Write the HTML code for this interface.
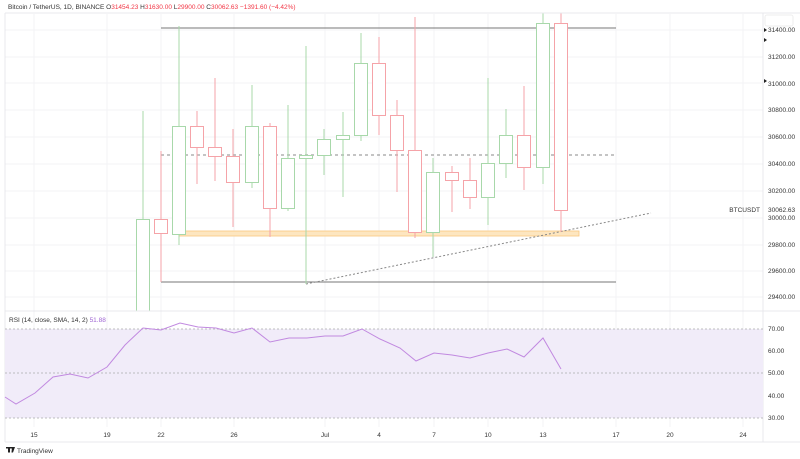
<!DOCTYPE html>
<html><head><meta charset="utf-8"><style>
html,body{margin:0;padding:0;background:#fff;}
svg{display:block;font-family:"Liberation Sans",sans-serif;}
</style></head><body>
<svg width="800" height="459" viewBox="0 0 800 459" xmlns="http://www.w3.org/2000/svg">
<rect width="800" height="459" fill="#fff"/>
<!-- grid -->
<g stroke="#f3f3f5" stroke-width="1">
<line x1="34" y1="14" x2="34" y2="427"/><line x1="107" y1="14" x2="107" y2="427"/><line x1="161" y1="14" x2="161" y2="427"/><line x1="234" y1="14" x2="234" y2="427"/><line x1="325" y1="14" x2="325" y2="427"/><line x1="379" y1="14" x2="379" y2="427"/><line x1="434" y1="14" x2="434" y2="427"/><line x1="488" y1="14" x2="488" y2="427"/><line x1="543" y1="14" x2="543" y2="427"/><line x1="616" y1="14" x2="616" y2="427"/><line x1="670" y1="14" x2="670" y2="427"/><line x1="743" y1="14" x2="743" y2="427"/>
<line x1="5" y1="30" x2="763" y2="30"/><line x1="5" y1="57" x2="763" y2="57"/><line x1="5" y1="83" x2="763" y2="83"/><line x1="5" y1="110" x2="763" y2="110"/><line x1="5" y1="137" x2="763" y2="137"/><line x1="5" y1="164" x2="763" y2="164"/><line x1="5" y1="191" x2="763" y2="191"/><line x1="5" y1="218" x2="763" y2="218"/><line x1="5" y1="245" x2="763" y2="245"/><line x1="5" y1="271" x2="763" y2="271"/><line x1="5" y1="297" x2="763" y2="297"/>
</g>
<!-- header -->
<text x="8" y="9" font-size="6.5" fill="#333">Bitcoin / TetherUS, 1D, BINANCE <tspan fill="#333"> O</tspan><tspan fill="#f23645">31454.23</tspan><tspan fill="#333"> H</tspan><tspan fill="#f23645">31630.00</tspan><tspan fill="#333"> L</tspan><tspan fill="#f23645">29900.00</tspan><tspan fill="#333"> C</tspan><tspan fill="#f23645">30062.63</tspan><tspan fill="#f23645">  −1391.60 (−4.42%)</tspan></text>
<!-- drawings -->
<rect x="179" y="231" width="400" height="5" fill="#fde6c0" stroke="#f9c77e" stroke-width="0.8"/>
<line x1="161" y1="28" x2="616" y2="28" stroke="#777" stroke-width="1"/>
<line x1="161" y1="282" x2="616" y2="282" stroke="#777" stroke-width="1"/>
<line x1="161" y1="155" x2="616" y2="155" stroke="#888" stroke-width="1" stroke-dasharray="3,3"/>
<line x1="306" y1="284" x2="651" y2="213" stroke="#888" stroke-width="1" stroke-dasharray="2,2"/>
<line x1="161" y1="151" x2="161" y2="282" stroke="#f5a3a8"/>
<!-- candles -->
<g fill="#fff" stroke-width="1">
<g stroke="#a8d8aa"><line x1="143" y1="111" x2="143" y2="219"/><path d="M136.5 311V219.5h13V311"/></g>
<g stroke="#f5a3a8"><rect x="154.5" y="219.5" width="13" height="14"/></g>
<g stroke="#a8d8aa"><line x1="179" y1="26" x2="179" y2="245"/><rect x="172.5" y="126.5" width="13" height="108"/></g>
<g stroke="#f5a3a8"><line x1="197" y1="111" x2="197" y2="184"/><rect x="190.5" y="126.5" width="13" height="21"/></g>
<g stroke="#f5a3a8"><line x1="215" y1="78" x2="215" y2="181"/><rect x="208.5" y="147.5" width="13" height="9"/></g>
<g stroke="#f5a3a8"><line x1="233" y1="129" x2="233" y2="227"/><rect x="226.5" y="156.5" width="13" height="26"/></g>
<g stroke="#a8d8aa"><line x1="252" y1="85" x2="252" y2="188"/><rect x="245.5" y="126.5" width="13" height="56"/></g>
<g stroke="#f5a3a8"><line x1="270" y1="123" x2="270" y2="237"/><rect x="263.5" y="126.5" width="13" height="82"/></g>
<g stroke="#a8d8aa"><line x1="288" y1="105" x2="288" y2="211"/><rect x="281.5" y="158.5" width="13" height="50"/></g>
<g stroke="#a8d8aa"><line x1="306" y1="46" x2="306" y2="284"/><rect x="299.5" y="155.5" width="13" height="3"/></g>
<g stroke="#a8d8aa"><line x1="324" y1="129" x2="324" y2="175"/><rect x="317.5" y="139.5" width="13" height="16"/></g>
<g stroke="#a8d8aa"><line x1="343" y1="112" x2="343" y2="197"/><rect x="336.5" y="135.5" width="13" height="4"/></g>
<g stroke="#a8d8aa"><line x1="361" y1="33" x2="361" y2="141"/><rect x="354.5" y="63.5" width="13" height="72"/></g>
<g stroke="#f5a3a8"><line x1="379" y1="37" x2="379" y2="135"/><rect x="372.5" y="63.5" width="13" height="52"/></g>
<g stroke="#f5a3a8"><line x1="397" y1="100" x2="397" y2="192"/><rect x="390.5" y="115.5" width="13" height="35"/></g>
<g stroke="#f5a3a8"><line x1="415" y1="17" x2="415" y2="238"/><rect x="408.5" y="150.5" width="13" height="82"/></g>
<g stroke="#a8d8aa"><line x1="433" y1="158" x2="433" y2="257"/><rect x="426.5" y="172.5" width="13" height="60"/></g>
<g stroke="#f5a3a8"><line x1="452" y1="166" x2="452" y2="212"/><rect x="445.5" y="172.5" width="13" height="8"/></g>
<g stroke="#f5a3a8"><line x1="470" y1="158" x2="470" y2="209"/><rect x="463.5" y="180.5" width="13" height="17"/></g>
<g stroke="#a8d8aa"><line x1="488" y1="78" x2="488" y2="225"/><rect x="481.5" y="163.5" width="13" height="34"/></g>
<g stroke="#a8d8aa"><line x1="506" y1="109" x2="506" y2="178"/><rect x="499.5" y="135.5" width="13" height="28"/></g>
<g stroke="#f5a3a8"><line x1="524" y1="86" x2="524" y2="190"/><rect x="517.5" y="135.5" width="13" height="32"/></g>
<g stroke="#a8d8aa"><line x1="543" y1="13" x2="543" y2="184"/><rect x="536.5" y="23.5" width="13" height="144"/></g>
<g stroke="#f5a3a8"><line x1="561" y1="13" x2="561" y2="232"/><rect x="554.5" y="23.5" width="13" height="187"/></g>
</g>
<!-- frame -->
<g stroke="#e8e8ec" fill="none">
<line x1="5" y1="13" x2="800" y2="13"/>
<line x1="5" y1="311" x2="800" y2="311"/>
<line x1="5" y1="442" x2="800" y2="442"/>
<line x1="5" y1="13" x2="5" y2="442"/>
<line x1="763" y1="13" x2="763" y2="442"/>
</g>
<!-- price axis -->
<g font-size="6.5" fill="#333">
<text x="768" y="32">31400.00</text><text x="768" y="59">31200.00</text><text x="768" y="86">31000.00</text><text x="768" y="112">30800.00</text><text x="768" y="139">30600.00</text><text x="768" y="166">30400.00</text><text x="768" y="193">30200.00</text><text x="768" y="220">30000.00</text><text x="768" y="247">29800.00</text><text x="768" y="273">29600.00</text><text x="768" y="299">29400.00</text>
<text x="760" y="212" text-anchor="end">BTCUSDT</text><text x="768" y="212">30062.63</text>
<text x="768" y="331">70.00</text><text x="768" y="353">60.00</text><text x="768" y="375">50.00</text><text x="768" y="398">40.00</text><text x="768" y="420">30.00</text>
</g>
<g fill="#222"><path d="M764 28l3 2-3 2z"/><path d="M764 38l3 2-3 2z"/><path d="M764 79l3 2-3 2z"/></g>
<rect x="765" y="15" width="28" height="11" rx="2" fill="#fff" stroke="#eee"/>
<!-- RSI -->
<rect x="5" y="329" width="758" height="89" fill="#f1ecf9"/>
<g stroke="#aaa" stroke-dasharray="2,2" stroke-width="0.8"><line x1="5" y1="329" x2="763" y2="329"/><line x1="5" y1="373" x2="763" y2="373"/><line x1="5" y1="418" x2="763" y2="418"/></g>
<polyline fill="none" stroke="#c189e0" stroke-width="1" points="5,397 16,404 35,393 53,377 70,374 88,378 107,367 125,345 143,328 161,330 180,323 198,327 216,328 234,333 252,328 270,342 289,338 307,338 325,336 343,336 362,329 380,339 400,348 416,361 434,353 452,355 470,358 488,353 507,349 524,357 543,338 561,369"/>
<text x="9" y="322" font-size="6.5" fill="#333">RSI (14, close, SMA, 14, 2) <tspan fill="#a066d3">51.88</tspan></text>
<!-- date axis -->
<g font-size="6.5" fill="#333" text-anchor="middle">
<text x="34" y="437">15</text><text x="107" y="437">19</text><text x="161" y="437">22</text><text x="234" y="437">26</text><text x="325" y="437">Jul</text><text x="379" y="437">4</text><text x="434" y="437">7</text><text x="488" y="437">10</text><text x="543" y="437">13</text><text x="616" y="437">17</text><text x="670" y="437">20</text><text x="743" y="437">24</text>
</g>
<path d="M6 447h6v1.5h-2v4h-2v-4h-2z M12 447h3l-2 5.5h-1.5z" fill="#222"/>
<text x="17" y="453" font-size="6.5" fill="#333">TradingView</text>
</svg>
</body></html>
